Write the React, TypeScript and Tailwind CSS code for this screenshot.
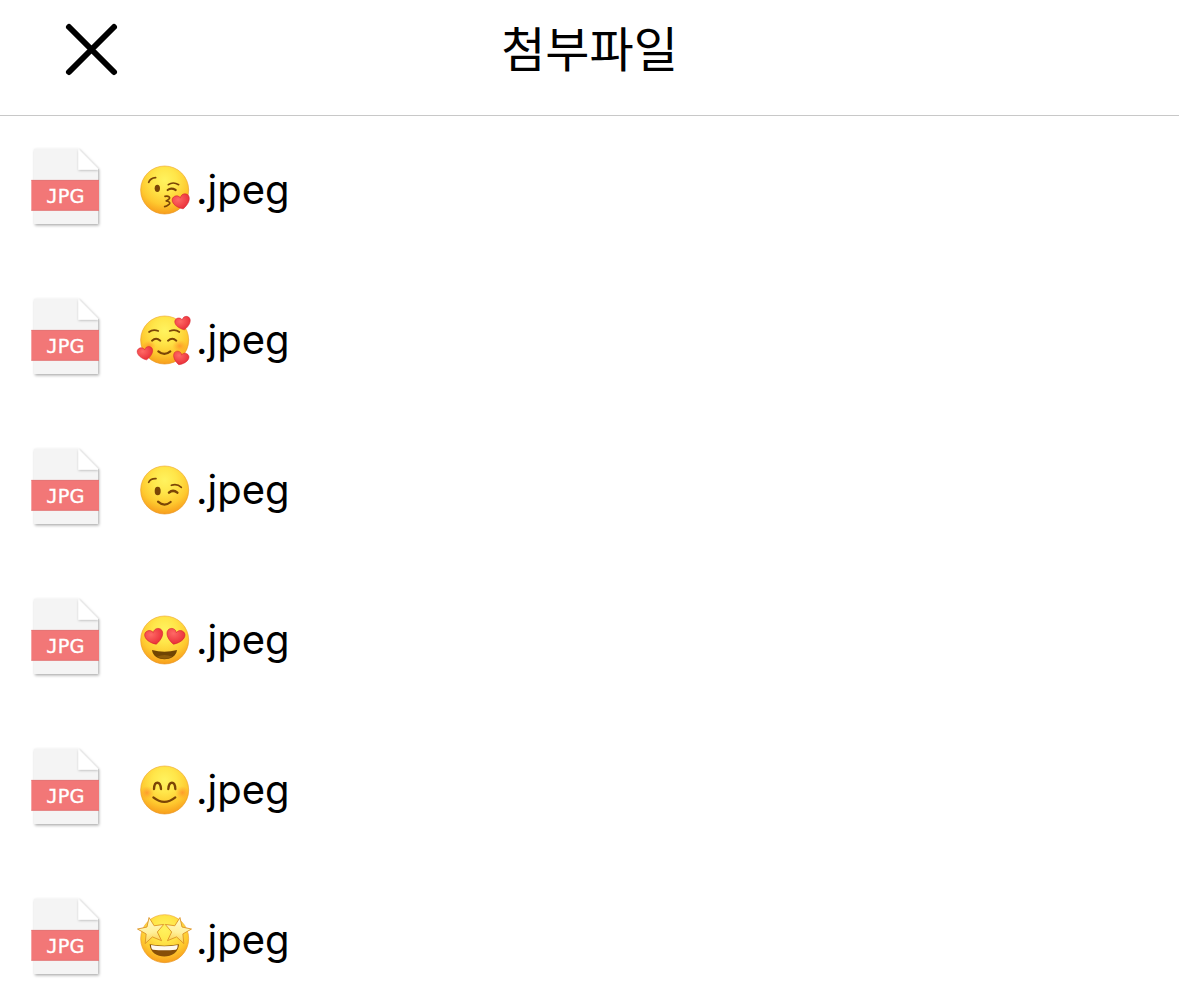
import type { ReactNode } from 'react';

type Mood = 'kiss' | 'hearts' | 'wink' | 'heartEyes' | 'smile' | 'starStruck';

const ATTACHMENTS: { id: Mood; label: string }[] = [
  { id: 'kiss',       label: '😘' },
  { id: 'hearts',     label: '🥰' },
  { id: 'wink',       label: '😉' },
  { id: 'heartEyes',  label: '😍' },
  { id: 'smile',      label: '😊' },
  { id: 'starStruck', label: '🤩' },
];

const BROWN = '#7b4506';

function Heart({ x, y, size, rotate = 0 }: { x: number; y: number; size: number; rotate?: number }) {
  return (
    <path
      d="M0 11C-5 9-13 3-13-4C-13-11-3-13 0-6C3-13 13-11 13-4C13 3 5 9 0 11Z"
      transform={`translate(${x} ${y}) rotate(${rotate}) scale(${size})`}
      fill="url(#heart)"
      stroke="#d3202c"
      strokeWidth="0.8"
    />
  );
}

function Star({ x, y, rotate }: { x: number; y: number; rotate: number }) {
  return (
    <path
      d="M0-40L11-13L40-12L17 7L25 35L0 19L-25 35L-17 7L-40-12L-11-13Z"
      transform={`translate(${x} ${y}) rotate(${rotate})`}
      fill="url(#star)"
      stroke="#dc9223"
      strokeWidth="2.5"
      strokeLinejoin="round"
    />
  );
}

const FEATURES: Record<Mood, ReactNode> = {
  kiss: (
    <>
      <g fill="none" stroke={BROWN} strokeLinecap="round">
        <path d="M56 81Q61 68 77 67M115 88Q129 78 146 88" strokeWidth="5" />
        <path d="M113 104Q123 96 137 104" strokeWidth="6.5" />
        <path d="M105 123C116 120 123 127 116 132Q111 136 107 137C118 137 123 143 116 148Q110 153 104 154" strokeWidth="5" />
      </g>
      <ellipse cx="82" cy="99" rx="8" ry="11" fill={BROWN} />
      <Heart x={154} y={139} size={2} rotate={-14} />
    </>
  ),
  hearts: (
    <>
      <ellipse cx="57" cy="122" rx="20" ry="16" fill="url(#blush)" />
      <ellipse cx="149" cy="122" rx="22" ry="18" fill="url(#blush)" />
      <g fill="none" stroke={BROWN} strokeLinecap="round">
        <path d="M57 80Q69 70 85 77M119 77Q136 70 148 80" strokeWidth="5" />
        <path d="M66 106Q78 95 91 106M114 106Q127 95 139 106" strokeWidth="6" />
        <path d="M85 138Q103 153 121 138" strokeWidth="6.5" />
      </g>
      <Heart x={159} y={54} size={1.8} rotate={-12} />
      <Heart x={46} y={144} size={1.8} rotate={-10} />
      <Heart x={152} y={159} size={1.8} rotate={16} />
    </>
  ),
  wink: (
    <>
      <g fill="none" stroke={BROWN} strokeLinecap="round">
        <path d="M56 81Q62 69 78 70M124 90Q141 84 154 96" strokeWidth="5" />
        <path d="M117 112Q129 101 142 112" strokeWidth="7.5" />
        <path d="M84 139Q103 156 122 140" strokeWidth="6.5" />
      </g>
      <ellipse cx="83" cy="107" rx="9" ry="13" fill={BROWN} />
    </>
  ),
  heartEyes: (
    <>
      <path d="M66 134Q103 144 141 134C137 171 70 171 66 134Z" fill="#704403" />
      <path d="M81 154Q103 144 127 154Q104 166 81 154Z" fill="#8e5b0a" />
      <Heart x={73} y={94} size={2.1} rotate={-14} />
      <Heart x={136} y={94} size={2.1} rotate={14} />
    </>
  ),
  smile: (
    <>
      <ellipse cx="51" cy="112" rx="21" ry="20" fill="url(#blush)" />
      <ellipse cx="157" cy="112" rx="21" ry="20" fill="url(#blush)" />
      <g fill="none" stroke={BROWN} strokeLinecap="round">
        <path d="M72 101C73 76 91 76 93 101M115 101C117 76 135 76 136 101" strokeWidth="7" />
        <path d="M70 126Q103 153 136 126" strokeWidth="6.5" />
      </g>
    </>
  ),
  starStruck: (
    <>
      <path d="M59 117Q103 125 147 117C145 166 61 166 59 117Z" fill="#874f08" />
      <path d="M63 119Q103 126 143 119Q143 132 137 133Q103 137 69 133Q63 131 63 119Z" fill="#fff9ef" />
      <Star x={64} y={76} rotate={-10} />
      <Star x={143} y={76} rotate={10} />
    </>
  ),
};

function Face({ mood, label }: { mood: Mood; label: string }) {
  return (
    <svg role="img" aria-label={label} viewBox="18 20 168 168" className="size-14 shrink-0 overflow-visible">
      <circle cx="104" cy={mood === 'starStruck' ? 100 : 104} r="72" fill="url(#face)" stroke="url(#rim)" strokeWidth="2" />
      {FEATURES[mood]}
    </svg>
  );
}

function JpgIcon() {
  return (
    <svg aria-hidden="true" viewBox="24 27 228 264" className="h-22 w-19 shrink-0">
      <path d="M42 41H175L234 101V267H42Z" fill="#f4f4f4" filter="url(#paperShadow)" />
      <path d="M175 42L234 101V104H175Z" fill="#fff" filter="url(#foldShadow)" />
      <rect x="34" y="135" width="203" height="92" fill="#f27777" />
      <path d="M34 136H237M34 226H237" stroke="#dc7474" strokeWidth="2" />
      {/* the J comes from the mono face, which has the top bar */}
      <text x="136" y="203" textAnchor="middle" fontSize="58" fill="#fff" stroke="#fff" strokeWidth="1">
        <tspan className="font-['DejaVu_Sans_Mono',monospace]">J</tspan>
        <tspan className="font-['DejaVu_Sans',sans-serif]">PG</tspan>
      </text>
    </svg>
  );
}

// Gradients and paper shadows, shared by every row
function SharedDefs() {
  return (
    <svg aria-hidden="true" className="absolute size-0">
      <defs>
        <radialGradient id="face" cx="0.5" cy="0.3" r="0.72">
          <stop offset="0" stopColor="#fff35f" />
          <stop offset="0.35" stopColor="#ffe64a" />
          <stop offset="0.7" stopColor="#fec92f" />
          <stop offset="1" stopColor="#f7991a" />
        </radialGradient>
        <linearGradient id="rim" x1="0" y1="0" x2="0" y2="1">
          <stop offset="0" stopColor="#f0ad35" />
          <stop offset="1" stopColor="#e8921a" />
        </linearGradient>
        <radialGradient id="heart" cx="0.35" cy="0.3" r="0.7">
          <stop offset="0" stopColor="#ff6965" />
          <stop offset="1" stopColor="#e92f39" />
        </radialGradient>
        <linearGradient id="star" x1="0" y1="0" x2="0" y2="1">
          <stop offset="0" stopColor="#fffbd0" />
          <stop offset="0.6" stopColor="#fff09a" />
          <stop offset="1" stopColor="#fbd04d" />
        </linearGradient>
        <radialGradient id="blush">
          <stop offset="0" stopColor="#ff7026" stopOpacity="0.55" />
          <stop offset="1" stopColor="#ff8a20" stopOpacity="0" />
        </radialGradient>
        <filter id="paperShadow" x="-10%" y="-10%" width="120%" height="120%">
          <feDropShadow dx="3" dy="4" stdDeviation="5" floodColor="#000" floodOpacity="0.35" />
        </filter>
        <filter id="foldShadow" x="-20%" y="-20%" width="150%" height="150%">
          <feDropShadow dx="1" dy="3" stdDeviation="3" floodColor="#000" floodOpacity="0.22" />
        </filter>
      </defs>
    </svg>
  );
}

export default function App() {
  return (
    <div className="bg-white text-black">
      <SharedDefs />

      {/* Header */}
      <header className="grid h-29 grid-cols-[1fr_auto_1fr] border-b border-[#c8c8c8] px-15 pt-4">
        <button type="button" aria-label="닫기" className="size-16">
          <svg viewBox="0 0 64 64" className="size-16" fill="none" stroke="currentColor" strokeWidth="6" strokeLinecap="round">
            <path d="M9 11L54 56M54 11L9 56" />
          </svg>
        </button>
        <h1 className="font-['Noto_Sans_CJK_KR',sans-serif] text-[48px] leading-15">첨부파일</h1>
      </header>

      {/* Attachments */}
      <ul className="flex flex-col gap-[46px] pt-5 pb-4 pl-7">
        {ATTACHMENTS.map(file => (
          <li key={file.id} className="flex h-26 items-center gap-8">
            <JpgIcon />
            <a href={`#${file.id}`} className="flex items-center gap-1 pt-1 font-['Inter',sans-serif] text-[40px] leading-14">
              <Face mood={file.id} label={file.label} />
              <span>.jpeg</span>
            </a>
          </li>
        ))}
      </ul>
    </div>
  );
}
